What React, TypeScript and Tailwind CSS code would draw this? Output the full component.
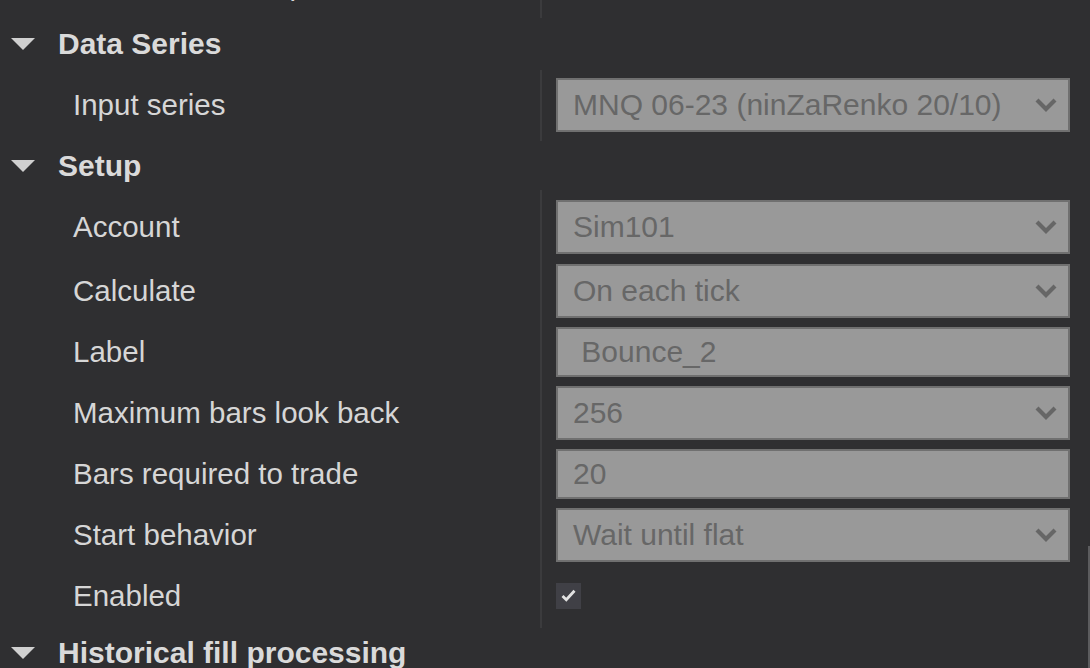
import React from 'react';

type Field = {
  label: string;
  kind: 'select' | 'text' | 'check';
  value?: string;
  extra?: string;
};

const Chevron: React.FC = () => (
  <svg width="22" height="14" viewBox="0 0 22 14" className="shrink-0">
    <polyline points="2,2 11,11 20,2" fill="none" stroke="#666666" strokeWidth="4.2" />
  </svg>
);

const Check: React.FC<{ on?: boolean }> = ({ on = true }) => (
  <div className="w-[25px] h-[26px] bg-[#404046] flex items-center justify-center">
    {on && (
      <svg width="15" height="13" viewBox="0 0 15 13">
        <path d="M1.5 7 L5.3 10.8 L13.5 1.8" fill="none" stroke="#e2e2e2" strokeWidth="2.8" />
      </svg>
    )}
  </div>
);

const Control: React.FC<{ field: Field }> = ({ field }) => {
  if (field.kind === 'check') return <Check />;
  const tall = field.kind === 'select';
  return (
    <div
      className={`w-[514px] ${tall ? 'h-[54px]' : 'h-[50px]'} bg-[#999999] border-2 border-[#707070] flex items-center justify-between pl-[15px] pr-[11px]`}
    >
      <span className="text-[30px] leading-none text-[#676767] whitespace-pre">{field.value}</span>
      {tall && <Chevron />}
    </div>
  );
};

const Header: React.FC<{ title: string; h: string }> = ({ title, h }) => (
  <div className={`${h} flex items-center`}>
    <svg width="24" height="12" viewBox="0 0 24 12" className="ml-[11px] mr-[23px]">
      <polygon points="0,0 24,0 12,12" fill="#d0d0d0" />
    </svg>
    <span className="text-[30px] font-bold leading-none text-[#dadada]">{title}</span>
  </div>
);

const Group: React.FC<{ fields: Field[]; pad: string }> = ({ fields, pad }) => (
  <div className="flex">
    <div className={`w-[540px] shrink-0 ${pad}`}>
      {fields.map((f) => (
        <div key={f.label} className={`h-[61px] flex items-center pl-[73px] ${f.extra ?? ''}`}>
          <span className="text-[29.5px] leading-none text-[#d6d6d6] whitespace-nowrap">{f.label}</span>
        </div>
      ))}
    </div>
    <div className={`border-l-2 border-[#3b3b3d] pl-[14px] ${pad}`}>
      {fields.map((f) => (
        <div key={f.label} className={`h-[61px] flex items-center ${f.extra ?? ''}`}>
          <Control field={f} />
        </div>
      ))}
    </div>
  </div>
);

export default function App() {
  const dataSeries: Field[] = [
    { label: 'Input series', kind: 'select', value: 'MNQ 06-23 (ninZaRenko 20/10)' },
  ];

  const setup: Field[] = [
    { label: 'Account', kind: 'select', value: 'Sim101', extra: 'mb-[3px]' },
    { label: 'Calculate', kind: 'select', value: 'On each tick' },
    { label: 'Label', kind: 'text', value: ' Bounce_2' },
    { label: 'Maximum bars look back', kind: 'select', value: '256' },
    { label: 'Bars required to trade', kind: 'text', value: '20' },
    { label: 'Start behavior', kind: 'select', value: 'Wait until flat' },
    { label: 'Enabled', kind: 'check' },
  ];

  return (
    <div className="relative w-[1090px] h-[668px] overflow-hidden bg-[#2f2f31] font-['Liberation_Sans',Arial,sans-serif] select-none">
      {/* tail of the group above, mostly scrolled away */}
      <div className="flex h-[18px]">
        <div className="w-[540px] shrink-0 h-[18px] relative overflow-hidden">
          <div className="absolute left-0 bottom-[3px] h-[61px] flex items-center pl-[73px]">
            <span className="text-[29.5px] leading-none text-[#d6d6d6] whitespace-nowrap">Enable Hard Stop</span>
          </div>
        </div>
        <div className="border-l-2 border-[#3b3b3d] pl-[14px] h-[18px] relative overflow-hidden">
          <div className="absolute left-[14px] bottom-[16px] w-[25px] h-[26px] bg-[#5a5a5e]" />
        </div>
      </div>

      <Header title="Data Series" h="h-[52px]" />
      <Group fields={dataSeries} pad="pt-[4px] pb-[6px]" />

      <Header title="Setup" h="h-[49px]" />
      <Group fields={setup} pad="pt-[6px] pb-[2px]" />

      <Header title="Historical fill processing" h="h-[49px]" />

      {/* scrollbar thumb */}
      <div className="absolute right-0 top-[546px] w-[2px] h-[130px] bg-[#5c5c5e]" />
    </div>
  );
}
